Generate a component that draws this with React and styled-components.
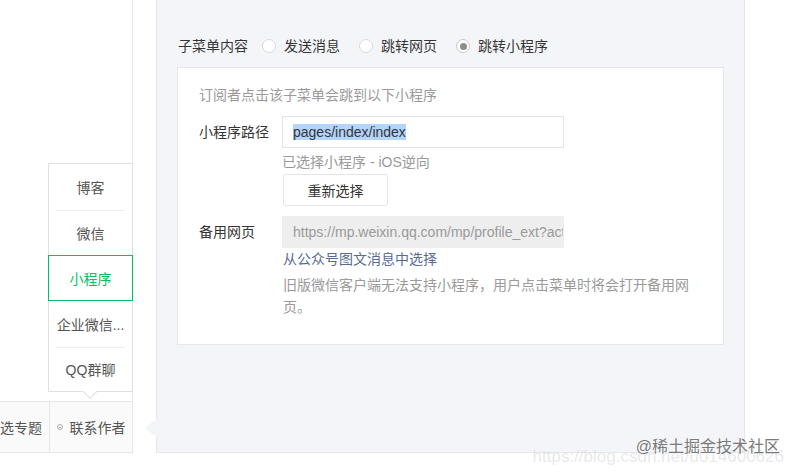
import React from 'react';
import styled, { createGlobalStyle } from 'styled-components';

const GlobalStyle = createGlobalStyle`
  html, body {
    margin: 0;
    padding: 0;
    background: #fff;
  }
  body {
    font-family: "Liberation Sans", "Noto Sans CJK SC", sans-serif;
    font-size: 14px;
    color: #353535;
  }
  * {
    box-sizing: border-box;
  }
`;

const Page = styled.div`
  position: relative;
  display: flex;
  width: 794px;
  height: 473px;
  overflow: hidden;
`;

const Sidebar = styled.div`
  position: relative;
  width: 133px;
  height: 453px;
  border-right: 1px solid #e7e7eb;
  display: flex;
  flex-direction: column;
  justify-content: flex-end;
  flex-shrink: 0;
`;

const BottomBar = styled.div`
  display: flex;
  justify-content: flex-end;
  height: 52px;
  border-top: 1px solid #e7e7eb;
  border-bottom: 1px solid #e7e7eb;
  overflow: hidden;
`;

const BarCell = styled.div`
  flex-shrink: 0;
  width: 83px;
  display: flex;
  align-items: center;
  justify-content: center;
  gap: 7px;
  background: #fafafa;
  border-left: ${p => (p.$first ? 'none' : '1px solid #e7e7eb')};
  color: #555;
  font-size: 14px;
`;

const DotIcon = styled.span`
  width: 6px;
  height: 6px;
  border-radius: 50%;
  border: 1px solid #aaa;
  position: relative;
  &::after {
    content: '';
    position: absolute;
    left: 1px;
    right: 1px;
    top: 1.5px;
    height: 1px;
    background: #aaa;
  }
`;

const Popover = styled.ul`
  position: absolute;
  left: 48px;
  bottom: 61px;
  width: 85px;
  margin: 0;
  padding: 0;
  list-style: none;
  background: #fff;
  border: 1px solid #e0e0e0;

  &::after {
    content: '';
    position: absolute;
    left: 36px;
    bottom: -6px;
    width: 9px;
    height: 9px;
    background: #fff;
    border-right: 1px solid #e0e0e0;
    border-bottom: 1px solid #e0e0e0;
    transform: rotate(45deg);
  }
`;

const PopItem = styled.li`
  position: relative;
  height: ${p => p.$h}px;
  display: flex;
  align-items: center;
  justify-content: center;
  color: ${p => (p.$active ? '#07c160' : '#555')};
  font-size: 14px;
  white-space: nowrap;
  border: ${p => (p.$active ? '1px solid #07c160' : 'none')};
  margin: ${p => (p.$active ? '0 -1px' : '0')};
  z-index: ${p => (p.$active ? 1 : 0)};

  &::before {
    content: '';
    display: ${p => (p.$divider ? 'block' : 'none')};
    position: absolute;
    top: 0;
    left: 7px;
    right: 7px;
    height: 1px;
    background: #ececec;
  }
`;

const Panel = styled.div`
  position: relative;
  margin-left: 23px;
  width: 589px;
  height: 453px;
  background: #f4f5f9;
  border: 1px solid #e7e7eb;
  border-top: none;
  padding: 36px 20px 0 21px;

  &::before {
    content: '';
    position: absolute;
    left: -12px;
    top: 418px;
    border-top: 10px solid transparent;
    border-bottom: 10px solid transparent;
    border-right: 12px solid #f4f5f9;
  }
`;

const RadioRow = styled.div`
  display: flex;
  align-items: center;
  height: 20px;
  line-height: 20px;
`;

const RowLabel = styled.span`
  margin-right: 14px;
`;

const RadioOption = styled.label`
  display: flex;
  align-items: center;
  gap: 8px;
  margin-right: 19px;
`;

const RadioCircle = styled.span`
  width: 14px;
  height: 14px;
  border-radius: 50%;
  border: 1px solid ${p => (p.$checked ? '#c9c9c9' : '#d9d9d9')};
  background: #fff;
  display: flex;
  align-items: center;
  justify-content: center;

  &::after {
    content: '';
    display: ${p => (p.$checked ? 'block' : 'none')};
    width: 7px;
    height: 7px;
    border-radius: 50%;
    background: #8c8c8c;
  }
`;

const Box = styled.div`
  margin-top: 11px;
  margin-left: -1px;
  width: 547px;
  height: 278px;
  background: #fff;
  border: 1px solid #e7e7eb;
  padding: 17px 21px 0;
`;

const Hint = styled.p`
  margin: 0 0 11px;
  line-height: 20px;
  color: #9a9a9a;
`;

const FormRow = styled.div`
  display: grid;
  grid-template-columns: 83px 1fr;
  margin-top: ${p => p.$gap || 0}px;
`;

const FieldLabel = styled.span`
  line-height: 32px;
`;

const Field = styled.div`
  display: flex;
  flex-direction: column;
  align-items: flex-start;
`;

const Input = styled.div`
  width: 282px;
  height: 32px;
  padding: 0 10px;
  display: flex;
  align-items: center;
  border: 1px solid ${p => (p.$disabled ? '#eeeeee' : '#e4e4e4')};
  background: ${p => (p.$disabled ? '#eeeeee' : '#fff')};
  color: ${p => (p.$disabled ? '#9a9a9a' : '#353535')};
  white-space: nowrap;
  overflow: hidden;
`;

const Selected = styled.span`
  background: #b3d4fc;
`;

const SubText = styled.span`
  margin-top: 4px;
  line-height: 20px;
  color: #9a9a9a;
`;

const Button = styled.button`
  margin-top: 2px;
  height: 32px;
  width: 105px;
  margin-left: 1px;
  background: #fff;
  border: 1px solid #e4e4e4;
  border-radius: 3px;
  font: inherit;
  color: #353535;
`;

const Link = styled.a`
  margin-top: 1px;
  margin-left: 1px;
  line-height: 20px;
  color: #576b95;
  text-decoration: none;
`;

const Note = styled.p`
  margin: 5px 0 0 1px;
  width: 414px;
  line-height: 22px;
  color: #9a9a9a;
`;

const Watermark = styled.div`
  position: absolute;
  right: 14px;
  bottom: 16px;
  font-size: 16px;
  color: #7a7a7a;
  text-shadow: 0 0 2px #fff;
`;

const WatermarkUrl = styled.div`
  position: absolute;
  right: 10px;
  bottom: 6px;
  font-size: 17px;
  color: rgba(205, 205, 210, 0.45);
  white-space: nowrap;
`;

const menus = [
  { name: '博客', h: 46 },
  { name: '微信', divider: true, h: 45 },
  { name: '小程序', active: true, h: 46 },
  { name: '企业微信...', h: 46 },
  { name: 'QQ群聊', divider: true, h: 44 },
];

export default function App() {
  return (
    <>
      <GlobalStyle />
      <Page>
        <Sidebar>
          <Popover>
            {menus.map(m => (
              <PopItem key={m.name} $active={m.active} $divider={m.divider} $h={m.h}>
                {m.name}
              </PopItem>
            ))}
          </Popover>
          <BottomBar>
            <BarCell $first>
              <DotIcon />
              精选专题
            </BarCell>
            <BarCell>
              <DotIcon />
              联系作者
            </BarCell>
          </BottomBar>
        </Sidebar>

        <Panel>
          <RadioRow>
            <RowLabel>子菜单内容</RowLabel>
            <RadioOption>
              <RadioCircle />
              发送消息
            </RadioOption>
            <RadioOption>
              <RadioCircle />
              跳转网页
            </RadioOption>
            <RadioOption>
              <RadioCircle $checked />
              跳转小程序
            </RadioOption>
          </RadioRow>

          <Box>
            <Hint>订阅者点击该子菜单会跳到以下小程序</Hint>
            <FormRow>
              <FieldLabel>小程序路径</FieldLabel>
              <Field>
                <Input>
                  <Selected>pages/index/index</Selected>
                </Input>
                <SubText>已选择小程序 - iOS逆向</SubText>
                <Button>重新选择</Button>
              </Field>
            </FormRow>
            <FormRow $gap={10}>
              <FieldLabel>备用网页</FieldLabel>
              <Field>
                <Input $disabled>https://mp.weixin.qq.com/mp/profile_ext?action=home</Input>
                <Link href="#">从公众号图文消息中选择</Link>
                <Note>旧版微信客户端无法支持小程序，用户点击菜单时将会打开备用网页。</Note>
              </Field>
            </FormRow>
          </Box>
        </Panel>

        <WatermarkUrl>https://blog.csdn.net/u014600626</WatermarkUrl>
        <Watermark>@稀土掘金技术社区</Watermark>
      </Page>
    </>
  );
}
